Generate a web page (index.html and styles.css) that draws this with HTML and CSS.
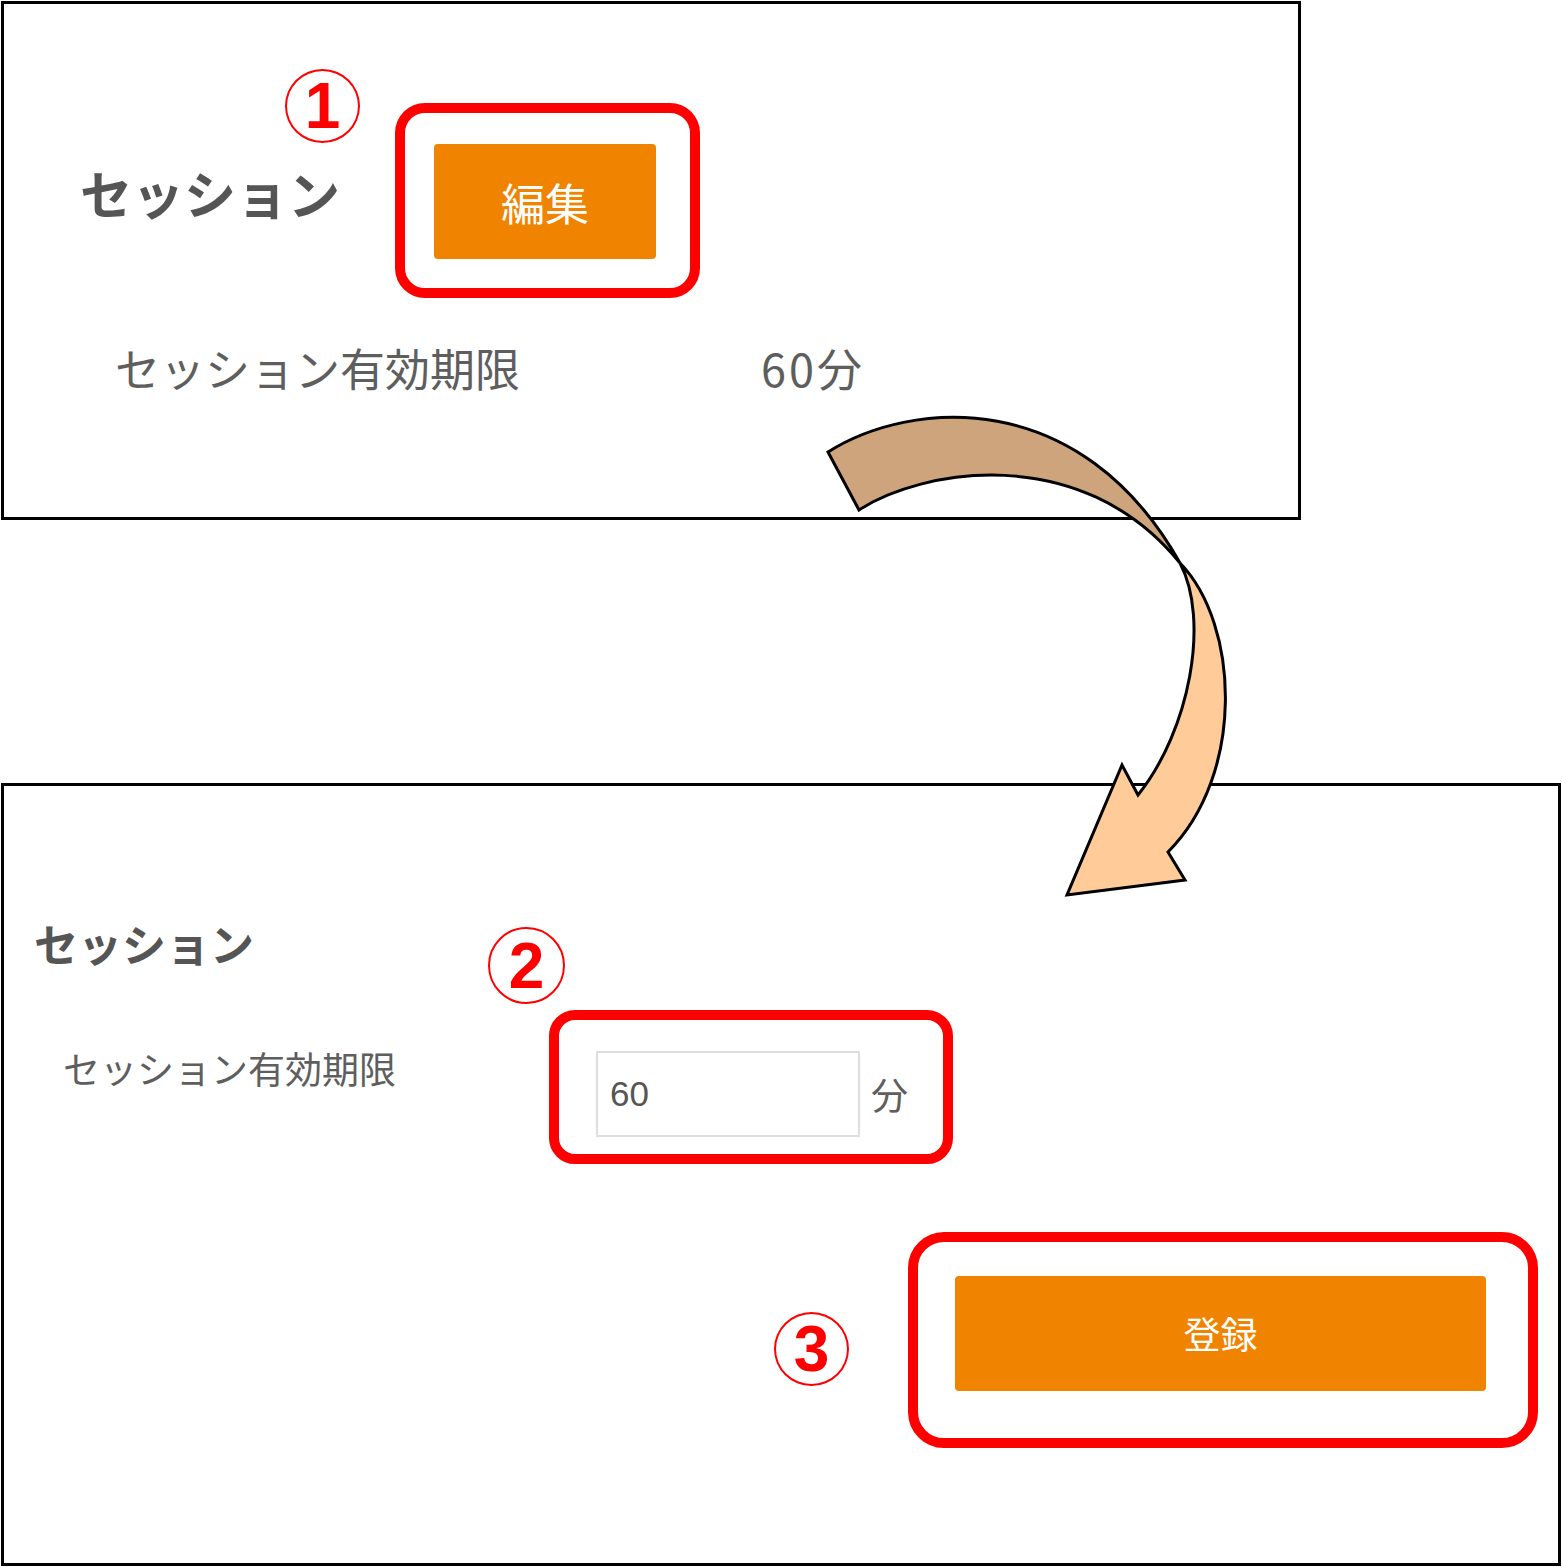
FILE: index.html
```html
<!DOCTYPE html>
<html lang="ja">
<head>
	<meta charset="UTF-8">
	<title>セッション設定</title>
	<link rel="stylesheet" href="styles.css">
</head>
<body>
	<div class="page">
		<!-- 表示モード -->
		<section class="panel panel-view">
			<div class="panel-head">
				<h2 class="panel-title">セッション</h2>
				<div class="mark mark-edit">
					<span class="step">1</span>
					<button class="btn btn-edit" type="button">編集</button>
				</div>
			</div>
			<div class="field">
				<span class="field-label">セッション有効期限</span>
				<span class="field-value">60分</span>
			</div>
		</section>

		<!-- 編集モード -->
		<section class="panel panel-form">
			<h2 class="panel-title">セッション</h2>
			<div class="field">
				<label class="field-label" for="session-limit">セッション有効期限</label>
				<div class="mark mark-input">
					<span class="step">2</span>
					<input id="session-limit" class="text-input" type="text" value="60">
					<span class="unit">分</span>
				</div>
			</div>
			<div class="actions">
				<div class="mark mark-submit">
					<span class="step">3</span>
					<button class="btn btn-submit" type="button">登録</button>
				</div>
			</div>
		</section>

		<!-- 画面遷移の矢印 -->
		<svg class="flow-arrow" width="1562" height="1567" viewBox="0 0 1562 1567">
			<path class="arrow-back" d="M828 452 C910 400 1080 385 1180 563 C1080 440 920 470 859 510 Z"/>
			<path class="arrow-front" d="M1180 563 C1240 625 1245 775 1168 852 L1185 880 L1067 895 L1122 765 L1138 795 C1190 730 1210 620 1180 563 Z"/>
		</svg>
	</div>
</body>
</html>
```

FILE: styles.css
```css
body{
	margin: 0;
	background: #fff;
	font-family: "Noto Sans CJK JP", "Noto Sans", sans-serif;
	color: #555;
}
.page{
	position: relative;
	width: 1562px;
	height: 1567px;
	padding: 1px 0 0 1px;
	box-sizing: border-box;
}
h2{
	margin: 0;
}

/* パネル */
.panel{
	box-sizing: border-box;
	border: 3px solid #000;
	background: #fff;
}
.panel-view{
	width: 1300px;
	height: 519px;
	padding: 99px 0 0 76px;
}
.panel-form{
	width: 1560px;
	height: 783px;
	margin-top: 263px;
	padding: 135px 20px 0 30px;
}
.panel-title{
	font-weight: 700;
	line-height: 1;
	white-space: nowrap;
}
.panel-view .panel-title{
	width: 315px;
	font-size: 52px;
	margin-bottom: 16px;
}
.panel-form .panel-title{
	font-size: 44px;
}
.panel-head{
	display: flex;
	align-items: center;
}

/* 項目行 */
.field{
	display: flex;
	align-items: flex-start;
	line-height: 1;
	color: #5e5e5e;
}
.panel-view .field{
	margin: 47px 0 0 35px;
	font-size: 45px;
}
.panel-view .field-label{
	width: 646px;
}
.panel-view .field-value{
	letter-spacing: 3px;
}
.panel-form .field{
	margin: 45px 0 0 29px;
	font-size: 37px;
}
.panel-form .field-label{
	width: 486px;
	margin-top: 40px;
}
.actions{
	display: flex;
	justify-content: flex-end;
	margin-top: 68px;
}

/* 赤枠と番号 */
.mark{
	position: relative;
	display: flex;
	align-items: center;
	border: 10px solid #f00;
}
.mark-edit{
	padding: 31px 34px 29px 29px;
	border-radius: 30px;
}
.mark-input{
	padding: 31px 35px 17px 37px;
	border-radius: 26px;
}
.mark-submit{
	padding: 34px 42px 47px 37px;
	border-radius: 36px;
}
.step{
	position: absolute;
	display: flex;
	align-items: center;
	justify-content: center;
	width: 75px;
	height: 74px;
	box-sizing: border-box;
	border: 2.5px solid #f00;
	border-radius: 50%;
	color: #f00;
	font: 700 64px/1 "Liberation Sans", Arial, sans-serif;
}
.mark-edit .step{
	left: -120px;
	top: -44px;
}
.mark-input .step{
	left: -71px;
	top: -93px;
	width: 77px;
	height: 77px;
}
.mark-submit .step{
	left: -144px;
	top: 70px;
}

/* ボタン */
.btn{
	display: block;
	height: 115px;
	padding: 0;
	border: 0;
	border-radius: 4px;
	background: #f08300;
	color: #fff;
	font-family: "Noto Sans CJK JP", sans-serif;
	line-height: 1;
	cursor: pointer;
}
.btn-edit{
	width: 222px;
	font-size: 44px;
}
.btn-submit{
	width: 531px;
	font-size: 37px;
}

/* 入力欄 */
.text-input{
	box-sizing: border-box;
	width: 264px;
	height: 86px;
	padding: 0 12px;
	border: 2px solid #dedede;
	border-radius: 0;
	color: #555;
	font: 35px "Liberation Sans", Arial, sans-serif;
	outline: none;
}
.unit{
	margin-left: 11px;
	font-size: 37px;
	line-height: 1;
	color: #5e5e5e;
}

/* 矢印 */
.flow-arrow{
	position: absolute;
	top: 0;
	left: 0;
	pointer-events: none;
}
.flow-arrow path{
	stroke: #000;
	stroke-width: 3;
	stroke-linejoin: miter;
}
.arrow-back{
	fill: #cda47c;
}
.arrow-front{
	fill: #ffcc99;
}
```
